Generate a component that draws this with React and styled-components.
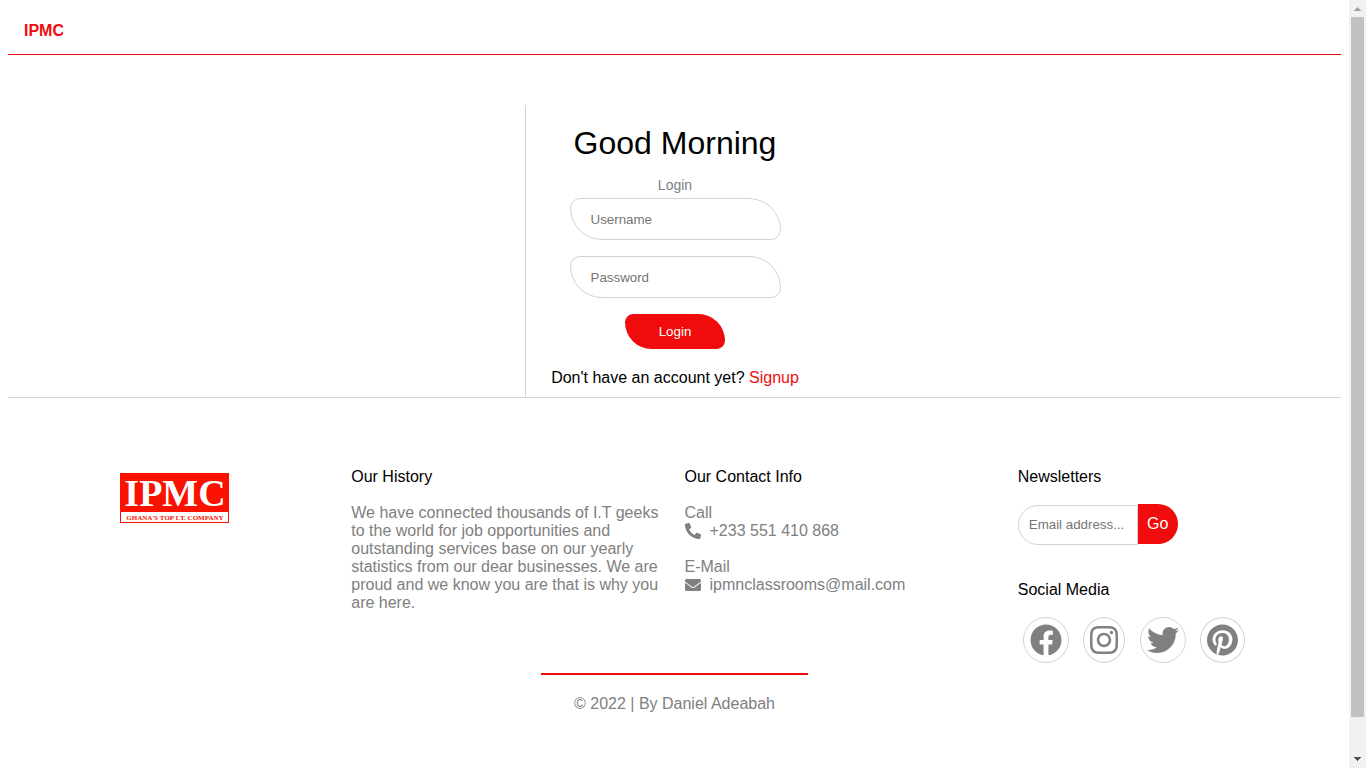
import React from "react";
import styled, { createGlobalStyle } from "styled-components";
import {
  FaEnvelope,
  FaFacebook,
  FaInstagram,
  FaPhoneAlt,
  FaPinterest,
  FaTwitter,
} from "react-icons/fa";

const red = "#f00c0c";
const line = "#d3d3d3";

const GlobalStyle = createGlobalStyle`
  *, *::before, *::after { box-sizing: border-box; }
  body {
    margin: 0;
    background: #fff;
    color: #000;
    font-family: "Liberation Sans", Arial, sans-serif;
    font-size: 16px;
    line-height: 18px;
  }
  h1, h2, p { margin: 0; font-weight: 400; }
  input, button { font-family: inherit; }
  a { text-decoration: none; }
`;

const Shell = styled.div`
  display: flex;
  align-items: flex-start;
`;

const Page = styled.div`
  flex: 1;
  min-width: 0;
  padding: 8px;
`;

const Header = styled.header`
  display: flex;
  padding: 14px 16px;
  border-bottom: 1px solid ${red};
`;

const Brand = styled.a`
  color: ${red};
  font-weight: 700;
`;

const Main = styled.main`
  display: flex;
  justify-content: center;
  padding-top: 50px;
  border-bottom: 1px solid ${line};
`;

const LoginPanel = styled.form`
  display: flex;
  flex-direction: column;
  align-items: center;
  width: 300px;
  padding: 20px 0 10px;
  border-left: 1px solid ${line};
`;

const Greeting = styled.h1`
  font-size: 32px;
  line-height: 36px;
`;

const FormTitle = styled.p`
  margin: 16px 0 5px;
  color: gray;
  font-size: 14px;
  line-height: 16px;
`;

const Field = styled.input`
  width: 211px;
  height: 42px;
  margin-bottom: 16px;
  padding: 0 20px;
  border: 1px solid ${line};
  border-radius: 10px 32px;
  outline: none;
`;

const LoginButton = styled.button`
  width: 100px;
  height: 35px;
  border: 0;
  border-radius: 10px 32px;
  background: ${red};
  color: #fff;
  font-weight: 500;
`;

const SignupText = styled.p`
  margin-top: 20px;
`;

const RedLink = styled.a`
  color: ${red};
`;

const Footer = styled.footer`
  padding-top: 60px;
`;

const Columns = styled.div`
  display: grid;
  grid-template-columns: repeat(4, 1fr);
`;

const Column = styled.section`
  padding: 10px 10px 6px;
  color: gray;
`;

const LogoColumn = styled(Column)`
  display: flex;
  justify-content: center;
  align-items: flex-start;
  padding-top: 15px;
`;

const Heading = styled.h2`
  margin-bottom: 18px;
  color: #000;
  font-size: 16px;
`;

const Contact = styled.div`
  margin-bottom: 18px;
`;

const ContactLine = styled.p`
  display: flex;
  align-items: center;
  gap: 9px;
`;

const Newsletter = styled.form`
  margin-bottom: 36px;
  white-space: nowrap;
`;

const EmailField = styled.input`
  width: 120px;
  height: 40px;
  padding: 0 10px;
  border: 1px solid ${line};
  border-radius: 20px 0 0 20px;
  outline: none;
`;

const GoButton = styled.button`
  width: 40px;
  height: 40px;
  padding: 0;
  border: 0;
  border-radius: 0 20px 20px 0;
  background: ${red};
  color: #fff;
  font-size: 16px;
`;

const SocialLink = styled.a`
  display: inline-block;
  margin: 0 5px;
  padding: 6px;
  border: 1px solid ${line};
  border-radius: 50%;
  color: gray;

  svg {
    display: block;
    width: ${(p) => p.$glyph}px;
    height: 32px;
  }
`;

const Credit = styled.p`
  padding-top: 20px;
  color: gray;
  text-align: center;
`;

const Rule = styled.hr`
  width: 20%;
  height: 2px;
  margin: 0 auto;
  border: 0;
  background: ${red};
`;

const Scrollbar = styled.div`
  position: sticky;
  top: 0;
  display: flex;
  flex-direction: column;
  flex: none;
  width: 17px;
  height: 100vh;
  background: #f1f1f1;
`;

const Thumb = styled.div`
  flex: 700;
  margin: 0 2px;
  background: #c1c1c1;
`;

const Track = styled.div`
  flex: 34;
`;

const Arrow = styled.svg`
  flex: none;
  display: block;
  width: 17px;
  height: 17px;
`;

const socials = [
  { name: "Facebook", Icon: FaFacebook, glyph: 32 },
  { name: "Instagram", Icon: FaInstagram, glyph: 28 },
  { name: "Twitter", Icon: FaTwitter, glyph: 32 },
  { name: "Pinterest", Icon: FaPinterest, glyph: 31 },
];

function Logo() {
  return (
    <svg width="109" height="50" viewBox="0 0 109 50" role="img" aria-label="IPMC">
      <rect width="109" height="50" fill="#fb1100" />
      <rect x="1" y="39" width="107" height="10" fill="#fff" />
      <g fontFamily="'Liberation Serif', serif" fontWeight="700" textAnchor="middle">
        <text x="55" y="33" fontSize="38" fill="#fff">IPMC</text>
        <text x="55" y="47" fontSize="7" fill="#fb1100">GHANA'S TOP I.T. COMPANY</text>
      </g>
    </svg>
  );
}

export default function App() {
  return (
    <>
      <GlobalStyle />
      <Shell>
        <Page>
          <Header>
            <Brand href="#">IPMC</Brand>
          </Header>
          <Main>
            <LoginPanel onSubmit={(e) => e.preventDefault()}>
              <Greeting>Good Morning</Greeting>
              <FormTitle>Login</FormTitle>
              <Field type="text" placeholder="Username" aria-label="Username" />
              <Field type="password" placeholder="Password" aria-label="Password" />
              <LoginButton type="submit">Login</LoginButton>
              <SignupText>
                Don't have an account yet? <RedLink href="#">Signup</RedLink>
              </SignupText>
            </LoginPanel>
          </Main>
          <Footer>
            <Columns>
              <LogoColumn>
                <Logo />
              </LogoColumn>
              <Column>
                <Heading>Our History</Heading>
                <p>
                  We have connected thousands of I.T geeks to the world for job
                  opportunities and outstanding services base on our yearly
                  statistics from our dear businesses. We are proud and we know
                  you are that is why you are here.
                </p>
              </Column>
              <Column>
                <Heading>Our Contact Info</Heading>
                <Contact>
                  <p>Call</p>
                  <ContactLine>
                    <FaPhoneAlt /> +233 551 410 868
                  </ContactLine>
                </Contact>
                <Contact>
                  <p>E-Mail</p>
                  <ContactLine>
                    <FaEnvelope /> ipmnclassrooms@mail.com
                  </ContactLine>
                </Contact>
              </Column>
              <Column>
                <Heading>Newsletters</Heading>
                <Newsletter onSubmit={(e) => e.preventDefault()}>
                  <EmailField
                    type="email"
                    placeholder="Email address..."
                    aria-label="Email address"
                  />
                  <GoButton type="submit">Go</GoButton>
                </Newsletter>
                <Heading>Social Media</Heading>
                <div>
                  {socials.map(({ name, Icon, glyph }) => (
                    <React.Fragment key={name}>
                      <SocialLink href="#" aria-label={name} $glyph={glyph}>
                        <Icon />
                      </SocialLink>{" "}
                    </React.Fragment>
                  ))}
                </div>
              </Column>
            </Columns>
            <Rule />
            <Credit>© 2022 | By Daniel Adeabah</Credit>
          </Footer>
        </Page>
        <Scrollbar aria-hidden="true">
          <Arrow viewBox="0 0 17 17" fill="#a3a3a3">
            <path d="M8 7h1v1h1v1h1v1h1v1H5v-1h1V9h1V8h1z" />
          </Arrow>
          <Thumb />
          <Track />
          <Arrow viewBox="0 0 17 17" fill="#505050">
            <path d="M5 6h7v1h-1v1h-1v1H9v1H8V9H7V8H6V7H5z" />
          </Arrow>
        </Scrollbar>
      </Shell>
    </>
  );
}
